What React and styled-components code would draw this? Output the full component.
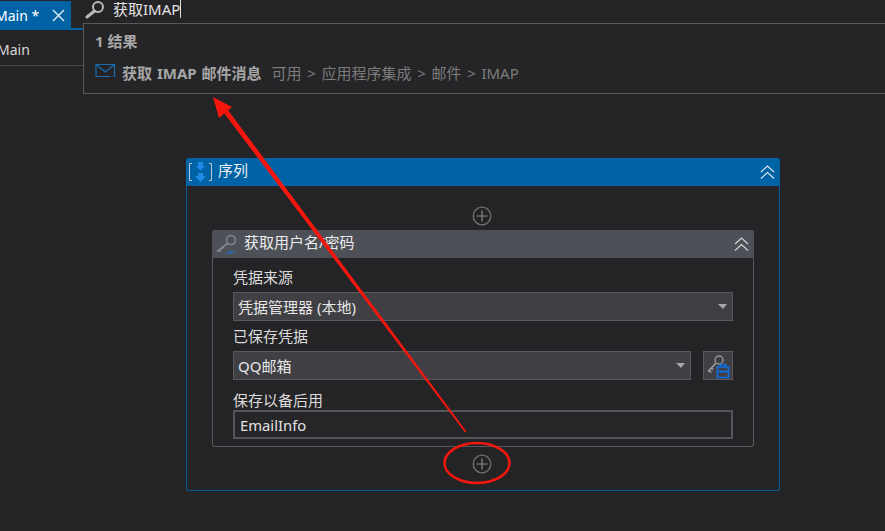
import styled, { createGlobalStyle } from 'styled-components'

const GlobalStyle = createGlobalStyle`
  html, body { margin: 0; padding: 0; background: #242426; }
  * { box-sizing: border-box; }
`

const Page = styled.div`
  position: relative;
  width: 885px;
  height: 531px;
  overflow: hidden;
  background: #242426;
  color: #e6e6e6;
  font-family: "Noto Sans", "Noto Sans CJK SC", sans-serif;
  font-size: 15px;
`

const TopRow = styled.div`
  display: flex;
  height: 30px;
`

const TabStrip = styled.div`
  width: 83px;
  height: 30px;
  padding-top: 1px;
  border-bottom: 2px solid #0063a6;
`

const Tab = styled.div`
  width: 71px;
  height: 27px;
  background: #0063a6;
  color: #fff;
  display: flex;
  align-items: center;
  justify-content: space-between;
  padding: 1px 6px 0 0;
  font-size: 14px;
`

const TabTitle = styled.span`
  margin-left: -5px;
  white-space: nowrap;
`

const SearchBar = styled.div`
  display: flex;
  align-items: flex-start;
  gap: 7px;
  margin-left: 2px;
  height: 23px;
`

const SearchText = styled.span`
  font-size: 15px;
  line-height: 18px;
  color: #e2e2e2;
  border-right: 1px solid #ddd;
  height: 18px;
`

const Breadcrumb = styled.div`
  width: 83px;
  height: 36px;
  border-bottom: 1px solid #4a4a4d;
  display: flex;
  align-items: center;
  color: #d8d8d8;
  padding-top: 3px;
  font-size: 14px;
`

const BreadcrumbText = styled.span`
  margin-left: -3px;
`

const Popup = styled.div`
  position: absolute;
  left: 83px;
  top: 23px;
  width: 803px;
  height: 71px;
  background: #252527;
  border: 1px solid #58585a;
  padding: 8px 11px 0;
`

const ResultCount = styled.div`
  font-size: 15px;
  font-weight: 700;
  line-height: 18px;
  color: #a8a8a8;
`

const ResultRow = styled.div`
  display: flex;
  align-items: center;
  margin-top: 12px;
  height: 20px;
`

const ResultName = styled.span`
  margin-left: 6px;
  font-size: 15px;
  font-weight: 700;
  word-spacing: 1px;
  color: #a6a6a6;
`

const ResultPath = styled.span`
  margin-left: 10px;
  font-size: 15px;
  word-spacing: 1.8px;
  color: #7c7c7c;
`

const Sequence = styled.section`
  width: 594px;
  height: 333px;
  margin: 92px 0 0 186px;
  border: 1px solid #0a5a92;
  border-top: none;
  border-radius: 3px;
`

const SequenceHeader = styled.header`
  display: flex;
  align-items: center;
  height: 28px;
  margin: 0 -1px;
  padding: 0 5px 0 2px;
  background: #0063a6;
  border-radius: 3px 3px 0 0;
  color: #e8eef4;
`

const HeaderTitle = styled.span`
  flex: 1;
  margin-left: ${({ $gap }) => $gap}px;
  font-size: 15px;
  line-height: 24px;
  margin-top: -5px;
`

const AddSlot = styled.div`
  display: flex;
  justify-content: center;
  align-items: center;
  height: ${({ $height }) => $height}px;
  padding-top: ${({ $top }) => $top || 0}px;
  padding-right: 2px;
`

const Activity = styled.section`
  width: 542px;
  height: 217px;
  margin-left: 25px;
  border: 1px solid #58585c;
  border-top: none;
  border-radius: 3px;
`

const ActivityHeader = styled.header`
  display: flex;
  align-items: center;
  height: 28px;
  margin: 0 -1px;
  padding: 0 5px 0 3px;
  background: #4e5058;
  border-radius: 3px 3px 0 0;
  color: #ececec;
`

const ActivityBody = styled.div`
  display: flex;
  flex-direction: column;
  padding: 0 20px;
`

const Label = styled.label`
  display: block;
  height: ${({ $height }) => $height}px;
  line-height: 20px;
  font-size: 15px;
  color: #dcdcdc;
  padding-top: ${({ $top }) => $top || 0}px;
`

const FieldRow = styled.div`
  display: flex;
  gap: 12px;
`

const Select = styled.div`
  flex: 1;
  display: flex;
  align-items: center;
  justify-content: space-between;
  height: 29px;
  padding: 0 4px;
  background: #3f3f44;
  border: 1px solid #5a5a5e;
  color: #e6e6e6;
  font-size: 15px;
`

const Caret = styled.span`
  width: 0;
  height: 0;
  border-left: 5px solid transparent;
  border-right: 4px solid transparent;
  border-top: 5px solid #a8a8a8;
  margin-right: 1px;
`

const IconButton = styled.button`
  display: flex;
  align-items: center;
  justify-content: center;
  width: 30px;
  height: 29px;
  padding: 0;
  background: #3f3f44;
  border: 1px solid #5a5a5e;
`

const TextInput = styled.div`
  height: 29px;
  padding: 0 5px;
  line-height: 27px;
  background: #262628;
  border: 2px solid #55555a;
  color: #e2e2e2;
  font-size: 14.8px;
`

const Annotation = styled.svg`
  position: absolute;
  left: 0;
  top: 0;
  pointer-events: none;
`

const SearchIcon = () => (
  <svg width="21" height="20" viewBox="0 0 21 20" fill="none">
    <circle cx="13" cy="7" r="5" stroke="#b8b8b8" strokeWidth="2" />
    <path d="M9.5 11 L2 17" stroke="#b8b8b8" strokeWidth="3" strokeLinecap="round" />
  </svg>
)

const CloseIcon = () => (
  <svg width="13" height="13" viewBox="0 0 13 13">
    <path d="M1 1 L12 12 M12 1 L1 12" stroke="#e8f0f6" strokeWidth="1.4" />
  </svg>
)

const MailIcon = () => (
  <svg width="21" height="18" viewBox="0 0 21 18" fill="none">
    <path d="M1 1.5 H19.5 V13.5 H1 Z" stroke="#1b6cb0" strokeWidth="1.2" />
    <path d="M1 1.5 L10.2 9 L19.5 1.5" stroke="#1b6cb0" strokeWidth="1.2" />
    <path d="M14 14.5 H20 M17 12 V17.5" stroke="#222" strokeWidth="1.6" />
  </svg>
)

const SequenceIcon = () => (
  <svg width="25" height="22" viewBox="0 0 25 22" fill="none">
    <path d="M4 2.5 H1.5 V19.5 H4 M21 2.5 H23.5 V19.5 H21" stroke="#b9c7d4" strokeWidth="1" />
    <path d="M10 1 H15 V5 H17.5 L12.5 9.5 L7.5 5 H10 Z" fill="#1e8ae6" />
    <path d="M10 12 H15 V15 H18 L12.5 21 L7 15 H10 Z" fill="#1e8ae6" />
  </svg>
)

const KeyIcon = () => (
  <svg width="22" height="20" viewBox="0 0 22 20" fill="none">
    <circle cx="16" cy="6" r="4.5" stroke="#84868c" strokeWidth="1.5" />
    <path d="M12.5 9.5 L2 17.5 M4 15.5 L6 17.5 M7 13 L8.5 14.5" stroke="#84868c" strokeWidth="2" />
    <path d="M12 18 H20 M12 20 H17" stroke="#1673e0" strokeWidth="1.2" />
  </svg>
)

const KeyCaseIcon = () => (
  <svg width="24" height="26" viewBox="0 0 24 26" fill="none">
    <circle cx="13" cy="7" r="4" stroke="#9a9a9a" strokeWidth="1.3" />
    <path d="M10 10 L2 18.5 M3 17 L5 19.5 M5.5 15 L7 16.5" stroke="#9a9a9a" strokeWidth="1.8" />
    <path d="M11.5 14 H22.5 V24.5 H11.5 Z M14.5 14 V11.5 H19.5 V14 M11.5 18.5 H22.5" stroke="#0f6fe0" strokeWidth="1.7" />
    <path d="M15 17 V20 M19 17 V20" stroke="#0f6fe0" strokeWidth="1.2" />
  </svg>
)

const Collapse = ({ color }) => (
  <svg width="15" height="15" viewBox="0 0 15 15" fill="none">
    <path d="M1 7 L7.5 1 L14 7 M1 13.5 L7.5 7.5 L14 13.5" stroke={color} strokeWidth="1.1" />
  </svg>
)

const AddIcon = () => (
  <svg width="20" height="20" viewBox="0 0 20 20" fill="none">
    <circle cx="10" cy="10" r="8.8" stroke="#727274" strokeWidth="1.3" />
    <path d="M10 4.5 V15.5 M4.5 10 H15.5" stroke="#8a8a8c" strokeWidth="1.2" />
  </svg>
)

export default function App() {
  return (
    <Page>
      <GlobalStyle />
      <TopRow>
        <TabStrip>
          <Tab>
            <TabTitle>Main *</TabTitle>
            <CloseIcon />
          </Tab>
        </TabStrip>
        <SearchBar>
          <SearchIcon />
          <SearchText>获取IMAP</SearchText>
        </SearchBar>
      </TopRow>
      <Breadcrumb>
        <BreadcrumbText>Main</BreadcrumbText>
      </Breadcrumb>

      <Popup>
        <ResultCount>1 结果</ResultCount>
        <ResultRow>
          <MailIcon />
          <ResultName>获取 IMAP 邮件消息</ResultName>
          <ResultPath>可用 &gt; 应用程序集成 &gt; 邮件 &gt; IMAP</ResultPath>
        </ResultRow>
      </Popup>

      <Sequence>
        <SequenceHeader>
          <SequenceIcon />
          <HeaderTitle $gap={5}>序列</HeaderTitle>
          <Collapse color="#dfe8f0" />
        </SequenceHeader>
        <AddSlot $height={44} $top={16}>
          <AddIcon />
        </AddSlot>
        <Activity>
          <ActivityHeader>
            <KeyIcon />
            <HeaderTitle $gap={7}>获取用户名/密码</HeaderTitle>
            <Collapse color="#d8d8d8" />
          </ActivityHeader>
          <ActivityBody>
            <Label $height={34} $top={9}>凭据来源</Label>
            <FieldRow>
              <Select>
                凭据管理器 (本地)
                <Caret />
              </Select>
            </FieldRow>
            <Label $height={30} $top={5}>已保存凭据</Label>
            <FieldRow>
              <Select>
                QQ邮箱
                <Caret />
              </Select>
              <IconButton aria-label="凭据">
                <KeyCaseIcon />
              </IconButton>
            </FieldRow>
            <Label $height={30} $top={10}>保存以备后用</Label>
            <TextInput>EmailInfo</TextInput>
          </ActivityBody>
        </Activity>
        <AddSlot $height={33}>
          <AddIcon />
        </AddSlot>
      </Sequence>

      {/* 红色标注: 箭头和圆圈 */}
      <Annotation width="885" height="531" viewBox="0 0 885 531" fill="none">
        <path d="M466.5 431.5 L465 432.5 L219.5 107 L223.5 104 Z" fill="#f5160e" />
        <path d="M213 97 L232 107 L219 118 Z" fill="#f5160e" />
        <ellipse cx="477" cy="463" rx="32.5" ry="20" stroke="#f5160e" strokeWidth="2.5" />
      </Annotation>
    </Page>
  )
}
